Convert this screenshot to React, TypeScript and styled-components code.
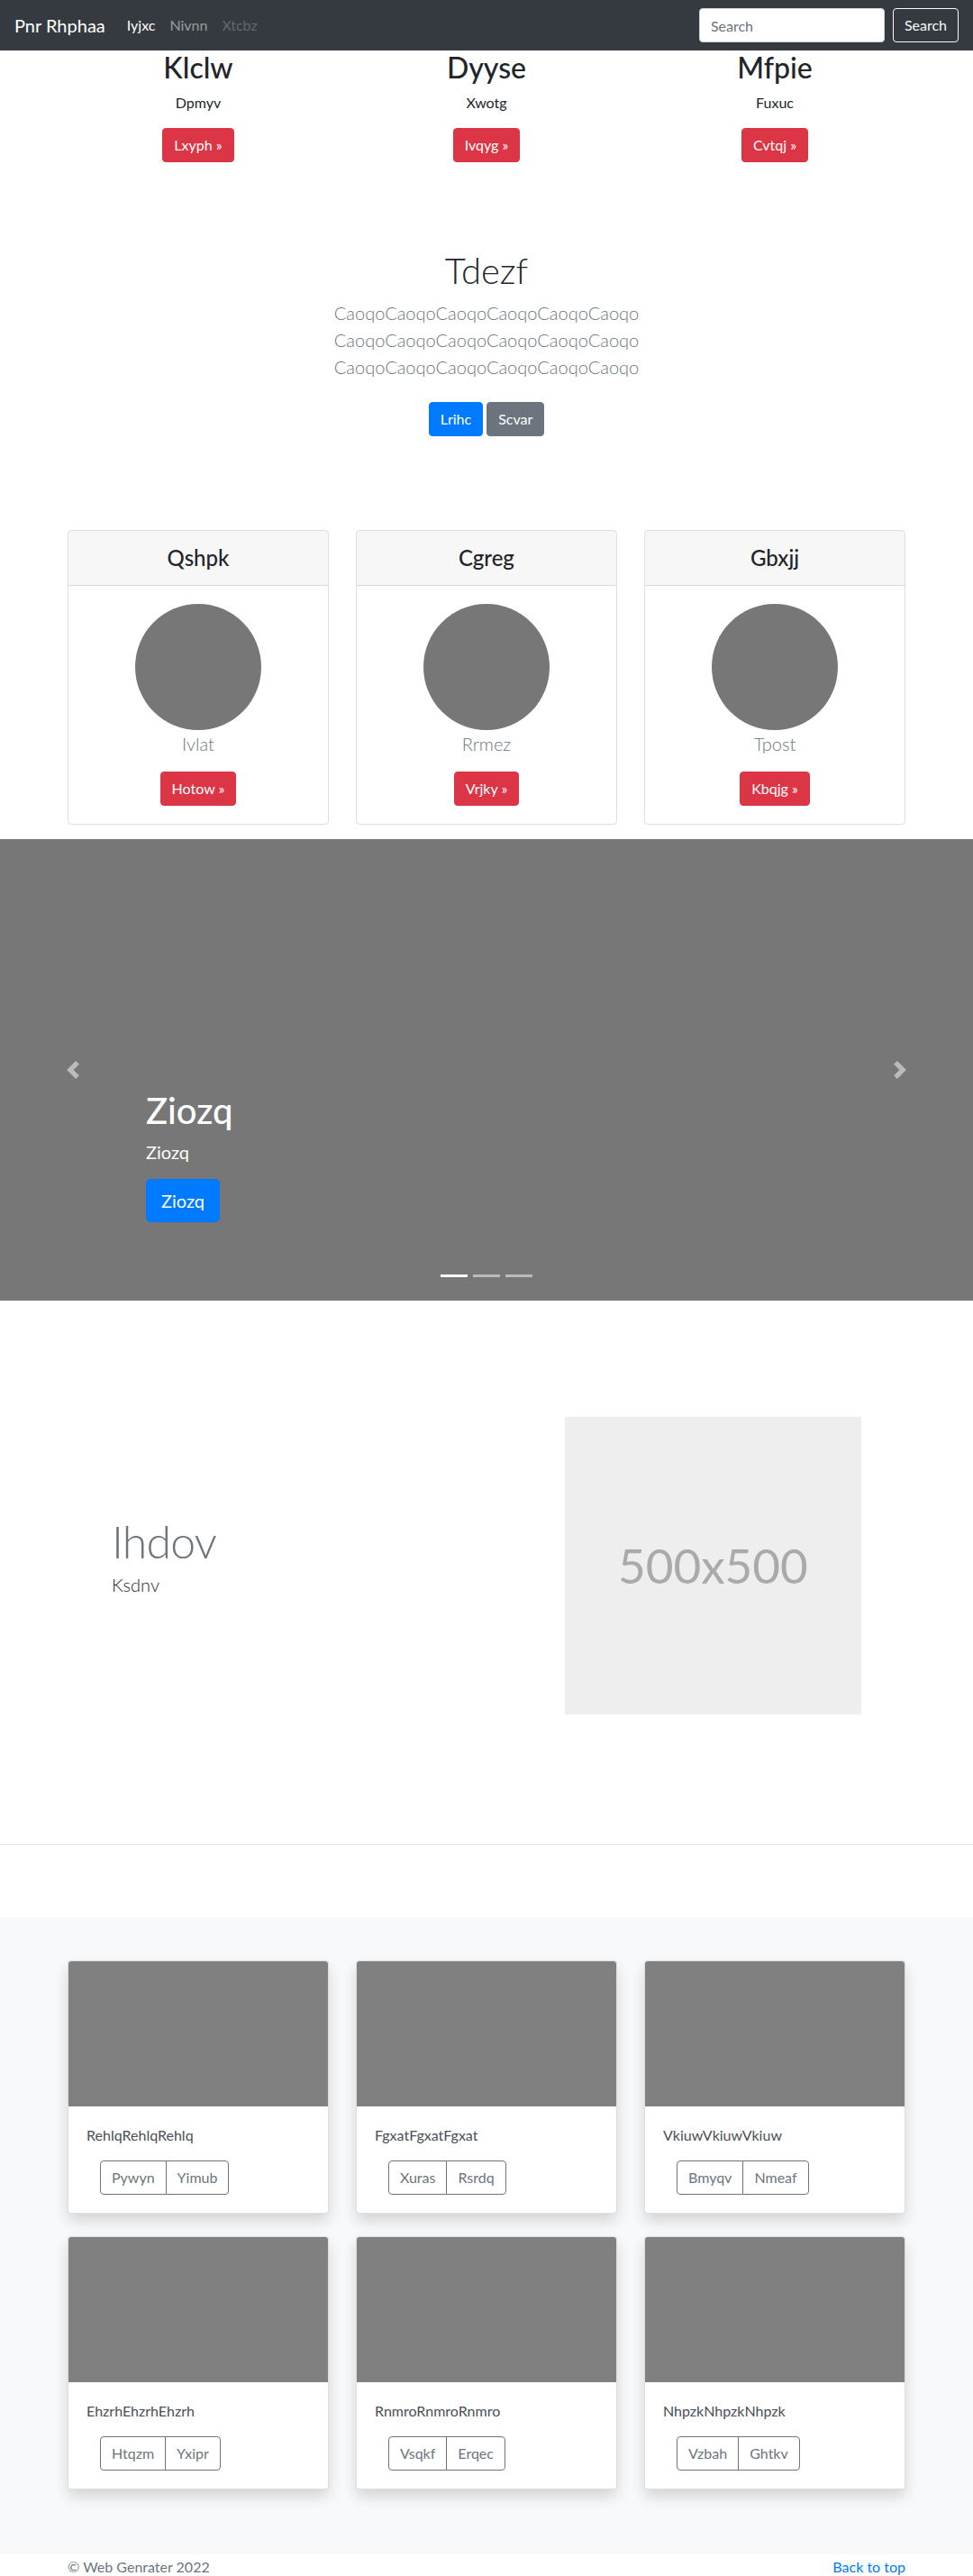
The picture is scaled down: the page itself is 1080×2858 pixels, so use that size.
import React from 'react';
import styled, { createGlobalStyle } from 'styled-components';

const GlobalStyle = createGlobalStyle`
  * {
    box-sizing: border-box;
  }
  body {
    margin: 0;
    font-family: Lato, 'Open Sans', sans-serif;
    font-size: 16px;
    line-height: 1.5;
    color: #212529;
    background: #fff;
  }
`;

type Variant = 'primary' | 'secondary' | 'danger';

const variantColors: Record<Variant, string> = {
  primary: '#007bff',
  secondary: '#6c757d',
  danger: '#dc3545',
};

const Button = styled.a<{ $variant: Variant; $large?: boolean }>`
  display: inline-block;
  font-size: ${(p) => (p.$large ? '20px' : '16px')};
  line-height: ${(p) => (p.$large ? '30px' : '24px')};
  padding: ${(p) => (p.$large ? '8px 16px' : '6px 12px')};
  border: 1px solid ${(p) => variantColors[p.$variant]};
  border-radius: ${(p) => (p.$large ? '5px' : '4px')};
  background: ${(p) => variantColors[p.$variant]};
  color: #fff;
  text-decoration: none;
  white-space: nowrap;
`;

const Container = styled.div`
  width: 960px;
  margin: 0 auto;
  padding: 0 15px;
`;

/* navbar */

const Navbar = styled.nav`
  height: 56px;
  background: #343a40;
  display: flex;
  align-items: center;
  padding: 0 16px;
`;

const Brand = styled.a`
  font-size: 20px;
  line-height: 30px;
  color: #fff;
  margin-right: 16px;
  text-decoration: none;
`;

const NavLink = styled.a<{ $state: 'active' | 'idle' | 'disabled' }>`
  padding: 8px;
  color: ${(p) =>
    p.$state === 'active'
      ? '#fff'
      : p.$state === 'idle'
      ? 'rgba(255,255,255,.5)'
      : 'rgba(255,255,255,.25)'};
  text-decoration: none;
`;

const SearchForm = styled.form`
  margin-left: auto;
  display: flex;
  gap: 9px;
`;

const SearchInput = styled.input`
  width: 206px;
  height: 38px;
  padding: 6px 12px;
  font: inherit;
  color: #495057;
  background: #fff;
  border: 1px solid #ced4da;
  border-radius: 4px;
  &::placeholder {
    color: #6c757d;
  }
`;

const SearchButton = styled.button`
  height: 38px;
  padding: 6px 12px;
  font: inherit;
  color: #f8f9fa;
  background: transparent;
  border: 1px solid #f8f9fa;
  border-radius: 4px;
`;

/* top features */

const ThreeCols = styled.div<{ $rowGap?: number }>`
  display: grid;
  grid-template-columns: repeat(3, 1fr);
  column-gap: 30px;
  row-gap: ${(p) => p.$rowGap ?? 0}px;
`;

const Feature = styled.div`
  text-align: center;
`;

const FeatureTitle = styled.h2`
  margin: 0 0 8px;
  font-size: 32px;
  font-weight: 500;
  line-height: 1.2;
`;

const FeatureText = styled.p`
  margin: 0 0 16px;
`;

/* jumbotron */

const Jumbotron = styled.section`
  padding-top: 80px;
  text-align: center;
`;

const JumboTitle = styled.h1`
  margin: 0 0 8px;
  font-size: 40px;
  font-weight: 300;
  line-height: 1.2;
`;

const Lead = styled.p<{ $muted?: boolean }>`
  margin: 0 0 16px;
  font-size: 20px;
  font-weight: 300;
  line-height: 30px;
  color: ${(p) => (p.$muted ? '#6c757d' : '#212529')};
`;

const JumboLead = styled(Lead)`
  max-width: 400px;
  margin-left: auto;
  margin-right: auto;
`;

const JumboActions = styled.div`
  display: flex;
  justify-content: center;
  gap: 4px;
  margin: 24px 0 0;
`;

/* pricing-like cards */

const CardSection = styled(Container)`
  margin-top: 104px;
`;

const ProfileCard = styled.div`
  border: 1px solid rgba(0, 0, 0, 0.125);
  border-radius: 4px;
  overflow: hidden;
  text-align: center;
`;

const CardHeader = styled.div`
  height: 61px;
  display: flex;
  align-items: center;
  justify-content: center;
  background: rgba(0, 0, 0, 0.03);
  border-bottom: 1px solid rgba(0, 0, 0, 0.125);
`;

const CardTitle = styled.h4`
  margin: 0;
  font-size: 24px;
  font-weight: 500;
  line-height: 1.2;
`;

const CardBody = styled.div`
  padding: 20px;
`;

const Avatar = styled.div`
  width: 140px;
  height: 140px;
  margin: 0 auto;
  border-radius: 50%;
  background: #777;
`;

/* carousel */

const Carousel = styled.section`
  position: relative;
  margin-top: 16px;
  height: 512px;
  background: #777;
`;

const Control = styled.a<{ $side: 'left' | 'right' }>`
  position: absolute;
  top: 0;
  bottom: 0;
  ${(p) => p.$side}: 0;
  width: 15%;
  display: flex;
  align-items: center;
  justify-content: center;
  opacity: 0.5;
`;

const Caption = styled.div`
  position: absolute;
  left: 15%;
  right: 15%;
  bottom: 51px;
  padding: 20px 0;
  color: #fff;
`;

const CaptionTitle = styled.h1`
  margin: 0 0 8px;
  font-size: 40px;
  font-weight: 500;
  line-height: 1.2;
`;

const CaptionText = styled.p`
  margin: 0 0 16px;
  font-size: 20px;
  line-height: 1.4;
`;

const Indicators = styled.ol`
  position: absolute;
  left: 0;
  right: 0;
  bottom: 26px;
  margin: 0;
  padding: 0;
  list-style: none;
  display: flex;
  justify-content: center;
`;

const Indicator = styled.li<{ $active?: boolean }>`
  width: 30px;
  height: 3px;
  margin: 0 3px;
  background: #fff;
  opacity: ${(p) => (p.$active ? 1 : 0.5)};
`;

/* featurette */

const FeaturetteRow = styled.div`
  width: 862px;
  margin: 129px auto 0;
  display: grid;
  grid-template-columns: 7fr 5fr;
  align-items: center;
`;

const FeatureCol = styled.div`
  padding: 0 15px;
`;

const FeaturetteHeading = styled.h2`
  margin: 0 0 8px;
  font-size: 50px;
  font-weight: 300;
  line-height: 1;
  letter-spacing: -0.8px;
  color: #6c757d;
`;

const Placeholder = styled.div`
  width: 100%;
  aspect-ratio: 1;
  background: #eee;
  color: #aaa;
  font-size: 53px;
  display: flex;
  align-items: center;
  justify-content: center;
`;

const Divider = styled.hr`
  margin: 144px 0 80px;
  border: 0;
  border-top: 1px solid rgba(0, 0, 0, 0.1);
`;

/* album */

const Album = styled.section`
  background: #f8f9fa;
  padding: 48px 0 72px;
`;

const AlbumCard = styled.div`
  background: #fff;
  border: 1px solid rgba(0, 0, 0, 0.125);
  border-radius: 4px;
  overflow: hidden;
  box-shadow: 0 8px 16px rgba(0, 0, 0, 0.15);
`;

const Thumb = styled.div`
  height: 161px;
  background: #808080;
`;

const AlbumText = styled.p`
  margin: 0 0 16px;
  color: #495057;
`;

const BtnGroup = styled.div`
  display: flex;
  margin-left: 15px;
`;

const GroupButton = styled.button`
  padding: 6px 12px;
  font: inherit;
  line-height: 24px;
  color: #6c757d;
  background: transparent;
  border: 1px solid #6c757d;
  border-radius: 4px 0 0 4px;
  & + & {
    margin-left: -1px;
    border-radius: 0 4px 4px 0;
  }
`;

/* footer */

const Footer = styled.footer`
  height: 24px;
  padding-top: 2px;
  color: #6c757d;
`;

const FooterRow = styled(Container)`
  display: flex;
  justify-content: space-between;
  line-height: 24px;
`;

const TopLink = styled.a`
  color: #007bff;
  text-decoration: none;
`;

const features = [
  { title: 'Klclw', text: 'Dpmyv', action: 'Lxyph' },
  { title: 'Dyyse', text: 'Xwotg', action: 'Ivqyg' },
  { title: 'Mfpie', text: 'Fuxuc', action: 'Cvtqj' },
];

const profiles = [
  { title: 'Qshpk', name: 'Ivlat', action: 'Hotow' },
  { title: 'Cgreg', name: 'Rrmez', action: 'Vrjky' },
  { title: 'Gbxjj', name: 'Tpost', action: 'Kbqjg' },
];

const albumItems = [
  { text: 'RehlqRehlqRehlq', buttons: ['Pywyn', 'Yimub'] },
  { text: 'FgxatFgxatFgxat', buttons: ['Xuras', 'Rsrdq'] },
  { text: 'VkiuwVkiuwVkiuw', buttons: ['Bmyqv', 'Nmeaf'] },
  { text: 'EhzrhEhzrhEhzrh', buttons: ['Htqzm', 'Yxipr'] },
  { text: 'RnmroRnmroRnmro', buttons: ['Vsqkf', 'Erqec'] },
  { text: 'NhpzkNhpzkNhpzk', buttons: ['Vzbah', 'Ghtkv'] },
];

const Chevron = ({ dir }: { dir: 'prev' | 'next' }) => (
  <svg width="20" height="20" viewBox="0 0 8 8" fill="#fff">
    {dir === 'prev' ? (
      <path d="M5.25 0l-4 4 4 4 1.5-1.5L4.25 4l2.5-2.5L5.25 0z" />
    ) : (
      <path d="M2.75 0l-1.5 1.5L3.75 4l-2.5 2.5L2.75 8l4-4-4-4z" />
    )}
  </svg>
);

const App = () => {
  return (
    <>
      <GlobalStyle />
      <Navbar>
        <Brand href="#">Pnr Rhphaa</Brand>
        <NavLink href="#" $state="active">Iyjxc</NavLink>
        <NavLink href="#" $state="idle">Nivnn</NavLink>
        <NavLink href="#" $state="disabled">Xtcbz</NavLink>
        <SearchForm onSubmit={(e) => e.preventDefault()}>
          <SearchInput type="text" placeholder="Search" />
          <SearchButton type="submit">Search</SearchButton>
        </SearchForm>
      </Navbar>

      <Container>
        <ThreeCols>
          {features.map((f) => (
            <Feature key={f.title}>
              <FeatureTitle>{f.title}</FeatureTitle>
              <FeatureText>{f.text}</FeatureText>
              <FeatureText>
                <Button href="#" $variant="danger">{f.action} &raquo;</Button>
              </FeatureText>
            </Feature>
          ))}
        </ThreeCols>
      </Container>

      <Jumbotron>
        <JumboTitle>Tdezf</JumboTitle>
        <JumboLead $muted>
          CaoqoCaoqoCaoqoCaoqoCaoqoCaoqo CaoqoCaoqoCaoqoCaoqoCaoqoCaoqo CaoqoCaoqoCaoqoCaoqoCaoqoCaoqo
        </JumboLead>
        <JumboActions>
          <Button href="#" $variant="primary">Lrihc</Button>
          <Button href="#" $variant="secondary">Scvar</Button>
        </JumboActions>
      </Jumbotron>

      <CardSection>
        <ThreeCols>
          {profiles.map((p) => (
            <ProfileCard key={p.title}>
              <CardHeader>
                <CardTitle>{p.title}</CardTitle>
              </CardHeader>
              <CardBody>
                <Avatar />
                <Lead $muted>{p.name}</Lead>
                <Button href="#" $variant="danger">{p.action} &raquo;</Button>
              </CardBody>
            </ProfileCard>
          ))}
        </ThreeCols>
      </CardSection>

      <Carousel>
        <Caption>
          <CaptionTitle>Ziozq</CaptionTitle>
          <CaptionText>Ziozq</CaptionText>
          <CaptionText>
            <Button href="#" $variant="primary" $large>Ziozq</Button>
          </CaptionText>
        </Caption>
        <Indicators>
          <Indicator $active />
          <Indicator />
          <Indicator />
        </Indicators>
        <Control href="#" $side="left">
          <Chevron dir="prev" />
        </Control>
        <Control href="#" $side="right">
          <Chevron dir="next" />
        </Control>
      </Carousel>

      <FeaturetteRow>
        <FeatureCol>
          <FeaturetteHeading>Ihdov</FeaturetteHeading>
          <Lead>Ksdnv</Lead>
        </FeatureCol>
        <FeatureCol>
          <Placeholder>500x500</Placeholder>
        </FeatureCol>
      </FeaturetteRow>

      <Divider />

      <Album>
        <Container>
          <ThreeCols $rowGap={25}>
            {albumItems.map((item) => (
              <AlbumCard key={item.text}>
                <Thumb />
                <CardBody>
                  <AlbumText>{item.text}</AlbumText>
                  <BtnGroup>
                    {item.buttons.map((b) => (
                      <GroupButton key={b} type="button">{b}</GroupButton>
                    ))}
                  </BtnGroup>
                </CardBody>
              </AlbumCard>
            ))}
          </ThreeCols>
        </Container>
      </Album>

      <Footer>
        <FooterRow>
          <span>&copy; Web Genrater 2022</span>
          <TopLink href="#">Back to top</TopLink>
        </FooterRow>
      </Footer>
    </>
  );
};

export default App;
